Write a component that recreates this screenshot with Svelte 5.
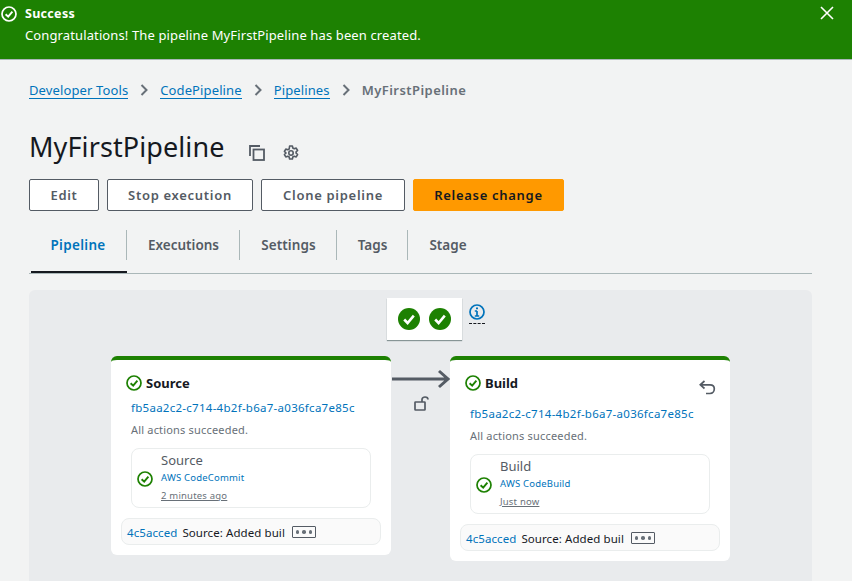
<script>
  const stages = [
    { name: 'Source', provider: 'AWS CodeCommit', time: '2 minutes ago', rollback: false },
    { name: 'Build', provider: 'AWS CodeBuild', time: 'Just now', rollback: true }
  ];
  const run = 'fb5aa2c2-c714-4b2f-b6a7-a036fca7e85c';
</script>

{#snippet okIcon(size, color)}
  <svg class="ok" width={size} height={size} viewBox="0 0 16 16" fill="none" stroke={color} stroke-width="1.7">
    <circle cx="8" cy="8" r="7" />
    <path d="M4.6 8.2 7.2 10.7 11.4 5.6" stroke-width="1.9" />
  </svg>
{/snippet}

<div class="page">
  <div class="banner">
    {@render okIcon(16, '#fff')}
    <div class="banner-text">
      <div class="banner-title">Success</div>
      <div class="banner-msg">Congratulations! The pipeline MyFirstPipeline has been created.</div>
    </div>
    <svg class="close" width="14" height="14" viewBox="0 0 14 14" stroke="#fff" stroke-width="1.6" fill="none">
      <path d="M1 1 13 13M13 1 1 13" />
    </svg>
  </div>

  <main class="content">
    <nav class="crumbs">
      <span class="crumb">Developer Tools</span>
      <svg class="chev" width="8" height="12" viewBox="0 0 8 12" fill="none" stroke="#687078" stroke-width="2"><path d="M1.5 1 6.5 6 1.5 11" /></svg>
      <span class="crumb">CodePipeline</span>
      <svg class="chev" width="8" height="12" viewBox="0 0 8 12" fill="none" stroke="#687078" stroke-width="2"><path d="M1.5 1 6.5 6 1.5 11" /></svg>
      <span class="crumb">Pipelines</span>
      <svg class="chev" width="8" height="12" viewBox="0 0 8 12" fill="none" stroke="#687078" stroke-width="2"><path d="M1.5 1 6.5 6 1.5 11" /></svg>
      <span class="current">MyFirstPipeline</span>
    </nav>

    <div class="title-row">
      <h1>MyFirstPipeline</h1>
      <svg class="copy" width="16" height="16" viewBox="0 0 16 16" fill="none" stroke="#545b64" stroke-width="1.8">
        <rect x="4.5" y="4.5" width="10.5" height="10.5" />
        <path d="M1 11V1H11" />
      </svg>
      <svg class="gear" width="16" height="16" viewBox="0 0 16 16" fill="none" stroke="#545b64" stroke-width="1.6">
        <circle cx="8" cy="8" r="2.2" />
        <path d="M6.6 1h2.8l.4 2 1.5.8 1.9-.7 1.4 2.4-1.5 1.3v1.4l1.5 1.3-1.4 2.4-1.9-.7-1.5.8-.4 2H6.6l-.4-2-1.5-.8-1.9.7-1.4-2.4 1.5-1.3V7.8L1.4 6.5l1.4-2.4 1.9.7 1.5-.8z" stroke-linejoin="round" />
      </svg>
    </div>

    <div class="actions">
      <button class="btn edit">Edit</button>
      <button class="btn stop">Stop execution</button>
      <button class="btn clone">Clone pipeline</button>
      <button class="btn primary">Release change</button>
    </div>

    <div class="tabs">
      <div class="tab active w1"><span>Pipeline</span></div>
      <div class="tab w2"><span>Executions</span></div>
      <div class="tab w3"><span>Settings</span></div>
      <div class="tab w4"><span>Tags</span></div>
      <div class="tab w5 last"><span>Stage</span></div>
    </div>

    <section class="panel">
      <div class="legend-row">
        <div class="legend">
          <svg width="22" height="22" viewBox="0 0 22 22"><circle cx="11" cy="11" r="11" fill="#1d8102" /><path d="M6.2 11.5 9.6 15 15.8 7.6" fill="none" stroke="#fff" stroke-width="2.6" /></svg>
          <svg width="22" height="22" viewBox="0 0 22 22"><circle cx="11" cy="11" r="11" fill="#1d8102" /><path d="M6.2 11.5 9.6 15 15.8 7.6" fill="none" stroke="#fff" stroke-width="2.6" /></svg>
        </div>
        <div class="info">
          <svg width="16" height="16" viewBox="0 0 16 16" fill="none" stroke="#0073bb" stroke-width="1.7">
            <circle cx="8" cy="8" r="7" />
            <path d="M8 7v5M5.8 12h4.4M5.8 7H8" />
            <path d="M8 3.4v1.8" stroke-width="2" />
          </svg>
        </div>
      </div>

      <div class="flow">
        {#each stages as s, i}
          {#if i > 0}
            <div class="link">
              <svg class="arrow" width="58" height="20" viewBox="0 0 58 20" fill="none" stroke="#545b64" stroke-width="3">
                <path d="M0 10H56M47 2l9 8-9 8" />
              </svg>
              <svg class="lock" width="15" height="15" viewBox="0 0 15 15" fill="none" stroke="#545b64" stroke-width="1.7">
                <rect x="1" y="6" width="10" height="8" rx="0.5" />
                <path d="M8 6V3.5C8 1.7 9.6 1 11 1S14 1.7 14 3.5" />
              </svg>
            </div>
          {/if}
          <article class="stage" class:tall={s.rollback}>
            <header class="stage-head">
              {@render okIcon(16, '#1d8102')}
              <h2>{s.name}</h2>
              {#if s.rollback}
                <svg class="undo" width="17" height="15" viewBox="0 0 17 15" fill="none" stroke="#545b64" stroke-width="1.7">
                  <path d="M5.5 1 1.3 4.8 5.5 8.5M1.5 4.8H11c2.8 0 4.3 1.8 4.3 4s-1.5 4.7-4.3 4.7H7" />
                </svg>
              {/if}
            </header>
            <div class="run">{run}</div>
            <div class="note">All actions succeeded.</div>
            <div class="action">
              {@render okIcon(16, '#1d8102')}
              <div class="action-body">
                <div class="action-name">{s.name}</div>
                <div class="provider">{s.provider}</div>
                <div class="time">{s.time}</div>
              </div>
            </div>
            <div class="commit">
              <span class="hash">4c5acced</span>
              <span class="msg">Source: Added buil</span>
              <span class="more"><i></i><i></i><i></i></span>
            </div>
          </article>
        {/each}
      </div>
    </section>
  </main>
</div>

<style>
  :global(body) {
    margin: 0;
    background: #f2f3f3;
  }
  .page {
    width: 852px;
    height: 581px;
    overflow: hidden;
    font-family: "Noto Sans", "Open Sans", sans-serif;
    color: #16191f;
    background: #f2f3f3;
  }
  .banner {
    box-sizing: border-box;
    height: 60px;
    background: #1d8102;
    color: #fff;
    display: flex;
    align-items: flex-start;
    padding: 6px 18px 0 1px;
    border-bottom: 1px solid #aab7b8;
  }
  .banner .ok {
    margin: 0 8px 0 0;
    flex: none;
  }
  .banner-text {
    flex: 1;
    margin-top: -2px;
  }
  .banner-title {
    font-weight: 700;
    font-size: 12.5px;
    line-height: 19px;
    letter-spacing: 0.3px;
  }
  .banner-msg {
    font-size: 13px;
    letter-spacing: 0.12px;
    line-height: 25px;
  }
  .content {
    padding: 0 40px 0 29px;
  }
  .crumbs {
    display: flex;
    align-items: center;
    height: 20px;
    margin-top: 20px;
    font-size: 13px;
    letter-spacing: 0.12px;
  }
  .crumb {
    color: #0073bb;
    border-bottom: 1px solid #0073bb;
    line-height: 16px;
    margin-top: 1px;
  }
  .chev {
    margin: 0 12px;
  }
  .current {
    color: #687078;
    font-weight: 600;
    letter-spacing: 0.45px;
  }
  .title-row {
    display: flex;
    align-items: center;
    margin-top: 29px;
    height: 36px;
  }
  h1 {
    margin: 0;
    font-size: 27px;
    font-weight: 400;
    line-height: 36px;
    letter-spacing: 0.1px;
  }
  .copy {
    margin: 11px 0 0 24px;
  }
  .gear {
    margin: 11px 0 0 18px;
  }
  .actions {
    display: flex;
    gap: 8px;
    margin-top: 14px;
  }
  .btn {
    box-sizing: border-box;
    height: 32px;
    padding: 0;
    border: 1px solid #545b64;
    border-radius: 2px;
    background: #fff;
    color: #545b64;
    font: 600 13px "Noto Sans", sans-serif;
    letter-spacing: 0.7px;
  }
  .edit { width: 70px; }
  .stop { width: 146px; }
  .clone { width: 144px; }
  .primary {
    width: 151px;
    background: #ff9900;
    border-color: #ff9900;
    color: #16191f;
  }
  .tabs {
    display: flex;
    height: 45px;
    margin-top: 17px;
    border-bottom: 1px solid #aab7b8;
  }
  .tab {
    box-sizing: border-box;
    display: flex;
    justify-content: center;
    padding-top: 7px;
    line-height: 20px;
    height: 45px;
    position: relative;
    font-size: 13.5px;
    font-weight: 600;
    color: #545b64;
  }
  .tab::after {
    content: '';
    position: absolute;
    right: 0;
    top: 2px;
    height: 30px;
    width: 1px;
    background: #aab7b8;
  }
  .tab.last::after { display: none; }
  .w1 { width: 98px; letter-spacing: 0.3px; }
  .w2 { width: 113px; }
  .w3 { width: 97px; letter-spacing: 0.1px; }
  .w4 { width: 71px; }
  .w5 { width: 80px; }
  .tab.active { color: #0073bb; }
  .tab.active::before {
    content: '';
    position: absolute;
    left: 2px;
    right: 0;
    bottom: 0;
    height: 2px;
    background: #16191f;
  }
  .panel {
    margin-top: 16px;
    height: 320px;
    background: #e9ebed;
    border-radius: 6px 6px 0 0;
    position: relative;
  }
  .legend-row {
    height: 50px;
    position: relative;
  }
  .legend {
    box-sizing: border-box;
    position: absolute;
    left: 358px;
    top: 8px;
    width: 75px;
    height: 42px;
    background: #fff;
    box-shadow: 0 1px 1px #879596;
    display: flex;
    align-items: center;
    justify-content: center;
    gap: 9px;
  }
  .info {
    position: absolute;
    left: 440px;
    top: 14px;
    width: 16px;
    height: 19px;
    border-bottom: 1px dashed #16191f;
  }
  .info svg { display: block; }
  .flow {
    display: flex;
    align-items: flex-start;
    padding-left: 82px;
    margin-top: 16px;
  }
  .stage {
    box-sizing: border-box;
    width: 280px;
    height: 199px;
    background: #fff;
    border-top: 4px solid #1d8102;
    border-radius: 6px;
    padding: 15px 10px 0;
  }
  .stage.tall { height: 205px; }
  .stage-head {
    display: flex;
    align-items: center;
    height: 16px;
    gap: 4px;
    padding-left: 5px;
    position: relative;
  }
  h2 {
    margin: 0;
    font-size: 13px;
    font-weight: 700;
  }
  .undo {
    position: absolute;
    right: 4px;
    top: 5px;
  }
  .run {
    margin: 9px 0 0 10px;
    font-size: 11.5px;
    line-height: 16px;
    color: #0073bb;
    letter-spacing: 0.27px;
  }
  .tall .run { margin-top: 15px; }
  .note {
    margin: 6px 0 0 10px;
    font-size: 11px;
    line-height: 16px;
    color: #687078;
    letter-spacing: 0.18px;
  }
  .action {
    box-sizing: border-box;
    display: flex;
    align-items: center;
    margin: 10px 10px 0 10px;
    height: 60px;
    border: 1px solid #eaeded;
    border-radius: 8px;
    padding-left: 5px;
    gap: 8px;
  }
  .action .ok { margin-top: 2px; }
  .action-name {
    font-size: 13px;
    line-height: 17px;
    color: #545b64;
  }
  .provider {
    font-size: 9.5px;
    line-height: 18px;
    color: #0073bb;
    letter-spacing: 0.2px;
  }
  .time {
    font-size: 9.5px;
    line-height: 18px;
    color: #687078;
    text-decoration: underline;
    letter-spacing: 0.2px;
  }
  .commit {
    box-sizing: border-box;
    display: flex;
    align-items: center;
    margin-top: 10px;
    height: 27px;
    background: #fafafa;
    border: 1px solid #eaeded;
    border-radius: 8px;
    padding: 1px 0 0 5px;
    font-size: 11.5px;
    letter-spacing: 0.08px;
  }
  .hash { color: #0073bb; }
  .msg { margin-left: 5px; color: #16191f; }
  .more {
    box-sizing: border-box;
    display: flex;
    align-items: center;
    justify-content: center;
    gap: 3px;
    width: 24px;
    height: 12px;
    margin-left: 7px;
    border: 1px solid #545b64;
    border-radius: 1px;
  }
  .more i {
    width: 3.5px;
    height: 3.5px;
    border-radius: 50%;
    background: #687078;
  }
  .link {
    width: 59px;
    display: flex;
    flex-direction: column;
    align-items: center;
    padding-top: 13px;
  }
  .arrow { display: block; margin-left: 1px; }
  .lock { margin-top: 7px; margin-left: 2px; }
</style>
